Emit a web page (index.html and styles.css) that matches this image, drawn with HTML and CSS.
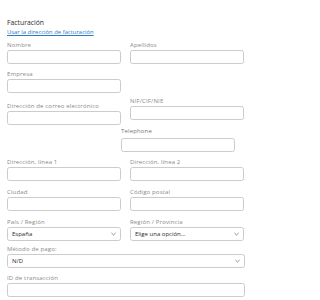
FILE: index.html
```html
<!DOCTYPE html>
<html lang="es">
<head>
<meta charset="utf-8">
<title>Facturación</title>
<link rel="stylesheet" href="styles.css">
</head>
<body>
<div class="form">
  <h3 class="title">Facturación</h3>
  <a class="link" href="#">Usar la dirección de facturación</a>

  <div class="row r1">
    <div class="field"><label>Nombre</label><div class="input"></div></div>
    <div class="field"><label>Apellidos</label><div class="input"></div></div>
  </div>
  <div class="row r2">
    <div class="field"><label>Empresa</label><div class="input"></div></div>
  </div>
  <div class="row r3">
    <div class="field email"><label>Dirección de correo electrónico</label><div class="input"></div></div>
    <div class="field"><label>NIF/CIF/NIE</label><div class="input"></div></div>
  </div>
  <div class="row r-tel">
    <div class="field tel"><label>Telephone</label><div class="input"></div></div>
  </div>
  <div class="row r4">
    <div class="field"><label>Dirección, línea 1</label><div class="input"></div></div>
    <div class="field"><label>Dirección, línea 2</label><div class="input"></div></div>
  </div>
  <div class="row r5">
    <div class="field"><label>Ciudad</label><div class="input"></div></div>
    <div class="field"><label>Código postal</label><div class="input"></div></div>
  </div>
  <div class="row r6">
    <div class="field"><label>País / Región</label><div class="input select"><span>España</span><svg class="chev" viewBox="0 0 6 4"><path d="M0.5 0.8 L3 3.2 L5.5 0.8" fill="none" stroke="#555" stroke-width="0.8"/></svg></div></div>
    <div class="field"><label>Región / Provincia</label><div class="input select"><span>Elige una opción…</span><svg class="chev" viewBox="0 0 6 4"><path d="M0.5 0.8 L3 3.2 L5.5 0.8" fill="none" stroke="#555" stroke-width="0.8"/></svg></div></div>
  </div>
  <div class="row r7">
    <div class="field full"><label>Método de pago:</label><div class="input select"><span>N/D</span><svg class="chev" viewBox="0 0 6 4"><path d="M0.5 0.8 L3 3.2 L5.5 0.8" fill="none" stroke="#555" stroke-width="0.8"/></svg></div></div>
  </div>
  <div class="row r8">
    <div class="field full"><label>ID de transacción</label><div class="input"></div></div>
  </div>
</div>
</body>
</html>
```

FILE: styles.css
```css
html, body {
  margin: 0;
  padding: 0;
  background: #ffffff;
}
body {
  font-family: "Open Sans", "Noto Sans", sans-serif;
  color: #333;
}
.form {
  width: 238px;
  padding: 18px 9px 0 7px;
}
.title {
  margin: 0;
  font-size: 6.8px;
  line-height: 9px;
  font-weight: 500;
  color: #2b2b2b;
}
.link {
  display: block;
  font-size: 5.9px;
  line-height: 8px;
  color: #2a7ac6;
  text-decoration: underline;
  margin-top: 1px;
}
.row {
  display: flex;
  align-items: flex-start;
  gap: 9px;
}
.field {
  width: 114px;
}
.field.full {
  width: 238px;
}
label {
  display: block;
  font-size: 6px;
  line-height: 8px;
  margin-bottom: 1px;
  color: #8a8a8a;
  letter-spacing: 0.15px;
  white-space: nowrap;
}
.input {
  box-sizing: border-box;
  height: 14px;
  border: 1px solid #cbcbcb;
  border-radius: 2.5px;
  background: #fff;
}
.select {
  display: flex;
  align-items: center;
  justify-content: space-between;
  padding: 0 4px 0 4px;
  font-size: 6px;
  color: #2a2a2a;
}
.chev {
  width: 5px;
  height: 4px;
}
.r1 { margin-top: 5px; }
.r2 { margin-top: 6px; }
.r3 { margin-top: 4px; }
.r3 .email { margin-top: 5px; }
.r-tel { margin-top: 2px; }
.tel { margin-left: 114px; }
.tel label { margin-bottom: 3px; color: #777; }
.r4 { margin-top: 6px; }
.r5 { margin-top: 7px; }
.r6 { margin-top: 7px; }
.r7 { margin-top: 4px; }
.r8 { margin-top: 6px; }
```
